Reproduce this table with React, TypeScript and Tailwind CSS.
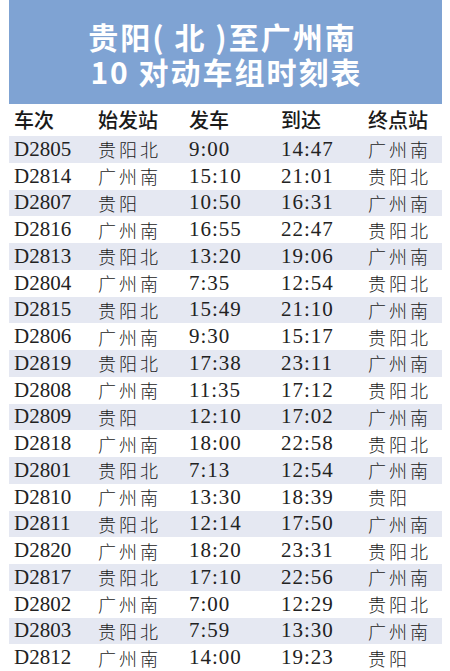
import React from "react";

type Train = {
  no: string;
  from: string;
  dep: string;
  arr: string;
  to: string;
};

const trains: Train[] = [
  { no: "D2805", from: "贵阳北", dep: "9:00", arr: "14:47", to: "广州南" },
  { no: "D2814", from: "广州南", dep: "15:10", arr: "21:01", to: "贵阳北" },
  { no: "D2807", from: "贵阳", dep: "10:50", arr: "16:31", to: "广州南" },
  { no: "D2816", from: "广州南", dep: "16:55", arr: "22:47", to: "贵阳北" },
  { no: "D2813", from: "贵阳北", dep: "13:20", arr: "19:06", to: "广州南" },
  { no: "D2804", from: "广州南", dep: "7:35", arr: "12:54", to: "贵阳北" },
  { no: "D2815", from: "贵阳北", dep: "15:49", arr: "21:10", to: "广州南" },
  { no: "D2806", from: "广州南", dep: "9:30", arr: "15:17", to: "贵阳北" },
  { no: "D2819", from: "贵阳北", dep: "17:38", arr: "23:11", to: "广州南" },
  { no: "D2808", from: "广州南", dep: "11:35", arr: "17:12", to: "贵阳北" },
  { no: "D2809", from: "贵阳", dep: "12:10", arr: "17:02", to: "广州南" },
  { no: "D2818", from: "广州南", dep: "18:00", arr: "22:58", to: "贵阳北" },
  { no: "D2801", from: "贵阳北", dep: "7:13", arr: "12:54", to: "广州南" },
  { no: "D2810", from: "广州南", dep: "13:30", arr: "18:39", to: "贵阳" },
  { no: "D2811", from: "贵阳北", dep: "12:14", arr: "17:50", to: "广州南" },
  { no: "D2820", from: "广州南", dep: "18:20", arr: "23:31", to: "贵阳北" },
  { no: "D2817", from: "贵阳北", dep: "17:10", arr: "22:56", to: "广州南" },
  { no: "D2802", from: "广州南", dep: "7:00", arr: "12:29", to: "贵阳北" },
  { no: "D2803", from: "贵阳北", dep: "7:59", arr: "13:30", to: "广州南" },
  { no: "D2812", from: "广州南", dep: "14:00", arr: "19:23", to: "贵阳" },
];

const cjk = "font-['Noto_Sans_CJK_SC',sans-serif]";
const serif = "font-['Liberation_Serif','Noto_Sans_CJK_SC',serif]";

function HeaderRow() {
  return (
    <div
      className={`grid grid-cols-[84px_91px_92px_87px_1fr] h-[32px] items-center pl-[5px] text-[20px] font-medium text-[#1a1a1a] ${cjk}`}
    >
      <span>车次</span>
      <span>始发站</span>
      <span>发车</span>
      <span>到达</span>
      <span>终点站</span>
    </div>
  );
}

function Row({ t, shaded }: { t: Train; shaded: boolean }) {
  return (
    <div
      className={`grid grid-cols-[84px_91px_92px_87px_1fr] h-[26.75px] shrink-0 items-center pl-[5px] text-[#222] ${
        shaded ? "bg-[#e5e8f2]" : "bg-white"
      }`}
    >
      <span className={`${serif} text-[21px] leading-none`}>{t.no}</span>
      <span className={`${cjk} text-[18px] font-light tracking-[3px] leading-none`}>{t.from}</span>
      <span className={`${serif} text-[21px] tracking-[1px] leading-none`}>{t.dep}</span>
      <span className={`${serif} text-[21px] tracking-[1px] leading-none`}>{t.arr}</span>
      <span className={`${cjk} text-[18px] font-light tracking-[3px] leading-none`}>{t.to}</span>
    </div>
  );
}

export default function App() {
  return (
    <div className="w-[450px] h-[671px] bg-white overflow-hidden">
      <div className="ml-[9px] w-[433px] flex flex-col">
        <div
          className={`h-[104px] pt-[3px] bg-[#7fa3d3] flex flex-col items-center justify-center text-white font-bold text-[30px] tracking-[2px] ${cjk}`}
        >
          <div className="h-[35px] leading-[35px] -ml-[6px]">贵阳( 北 )至广州南</div>
          <div className="h-[35px] leading-[35px] ml-[2px]">10 对动车组时刻表</div>
        </div>
        <HeaderRow />
        {trains.map((t, i) => (
          <Row key={t.no} t={t} shaded={i % 2 === 0} />
        ))}
      </div>
    </div>
  );
}
